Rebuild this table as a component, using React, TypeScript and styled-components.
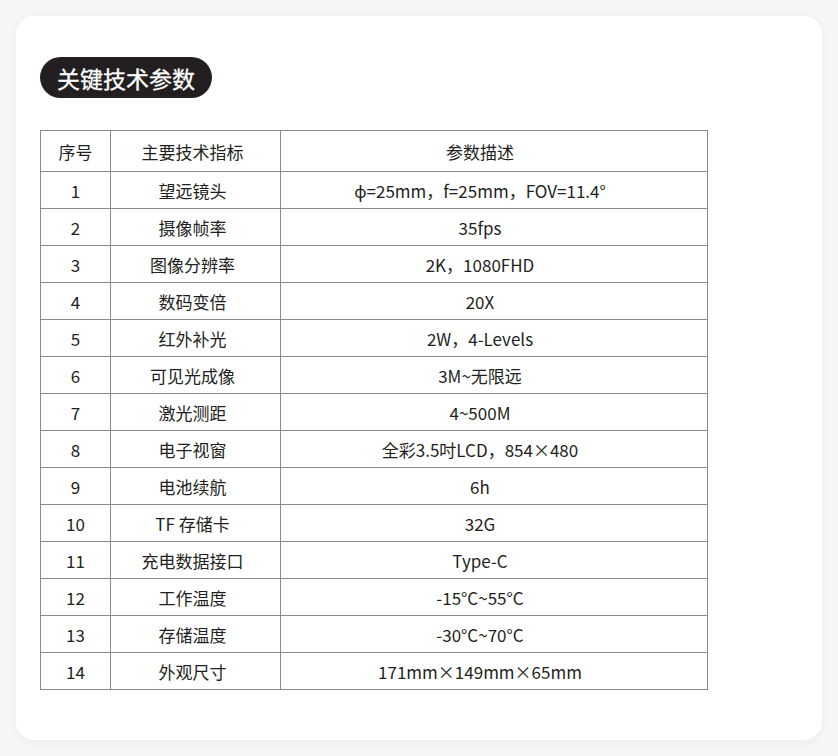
import { FunctionComponent } from "react";
import styled, { createGlobalStyle } from "styled-components";

const rows: [string, string][] = [
  ["望远镜头", "ϕ=25mm，f=25mm，FOV=11.4°"],
  ["摄像帧率", "35fps"],
  ["图像分辨率", "2K，1080FHD"],
  ["数码变倍", "20X"],
  ["红外补光", "2W，4-Levels"],
  ["可见光成像", "3M~无限远"],
  ["激光测距", "4~500M"],
  ["电子视窗", "全彩3.5吋LCD，854×480"],
  ["电池续航", "6h"],
  ["TF 存储卡", "32G"],
  ["充电数据接口", "Type-C"],
  ["工作温度", "-15°C~55°C"],
  ["存储温度", "-30°C~70°C"],
  ["外观尺寸", "171mm×149mm×65mm"],
];

const App: FunctionComponent = () => {
  return (
    <>
      <GlobalStyle />
      <Card>
        <Title>关键技术参数</Title>
        <SpecTable>
          <colgroup>
            <col style={{ width: 70 }} />
            <col style={{ width: 170 }} />
            <col />
          </colgroup>
          <thead>
            <tr>
              <HeadCell>序号</HeadCell>
              <HeadCell $shift={6}>主要技术指标</HeadCell>
              <HeadCell $shift={28}>参数描述</HeadCell>
            </tr>
          </thead>
          <tbody>
            {rows.map(([name, value], i) => (
              <tr key={name}>
                <Cell>{i + 1}</Cell>
                <Cell $shift={6}>{name}</Cell>
                <Cell $shift={28}>{value}</Cell>
              </tr>
            ))}
          </tbody>
        </SpecTable>
      </Card>
    </>
  );
};

const GlobalStyle = createGlobalStyle`
  html, body {
    margin: 0;
    padding: 0;
    background: #f6f6f6;
  }
  body {
    font-family: "Noto Sans CJK SC", "Noto Sans", sans-serif;
    color: #231f20;
  }
`;

const Card = styled.div`
  margin: 16px;
  width: 806px;
  height: 724px;
  box-sizing: border-box;
  background: #ffffff;
  border-radius: 18px;
  box-shadow: 0 2px 8px rgba(0, 0, 0, 0.05);
  padding: 41px 24px 0;
`;

const Title = styled.div`
  display: inline-flex;
  align-items: center;
  justify-content: center;
  height: 41px;
  width: 172px;
  border-radius: 21px;
  background: #231f20;
  color: #ffffff;
  font-size: 23px;
  font-weight: 400;
  -webkit-text-stroke: 0.3px #ffffff;
  margin-bottom: 32px;
`;

const SpecTable = styled.table`
  width: 668px;
  border-collapse: collapse;
  table-layout: fixed;
  border-top: 1px solid #7a7a7a;
  border-right: 1px solid #7a7a7a;
  border-left: 1px solid #231f20;
  border-bottom: 1.5px solid #231f20;
`;

const Cell = styled.td<{ $shift?: number }>`
  height: 36px;
  padding: 0 ${(p) => p.$shift ?? 0}px 0 0;
  border: 1px solid #8a8a8a;
  text-align: center;
  vertical-align: middle;
  font-size: 17px;
  color: #231f20;
  line-height: 1;
`;

const HeadCell = styled(Cell).attrs({ as: "th" })`
  height: 40px;
  font-weight: 400;
`;

export default App;
